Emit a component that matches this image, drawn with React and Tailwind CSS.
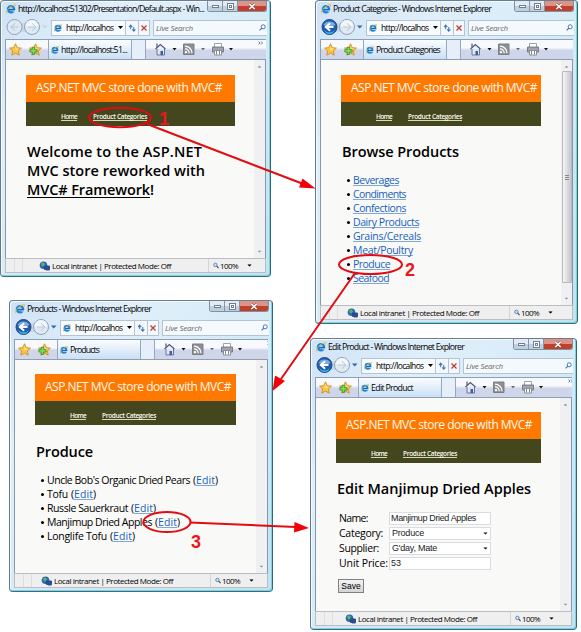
import React, { useLayoutEffect, useRef } from "react";

// Text run whose tracking is adjusted so that it spans a given width.
function Fit({ w, children, className = "" }) {
  const ref = useRef(null);
  useLayoutEffect(() => {
    const el = ref.current;
    el.style.letterSpacing = "0px";
    const natural = el.getBoundingClientRect().width;
    const n = el.textContent.length;
    el.style.letterSpacing = (w - natural) / n + "px";
  }, [w]);
  return (
    <span ref={ref} className={"inline-block whitespace-nowrap " + className}>
      {children}
    </span>
  );
}

const IeIcon = ({ className = "" }) => (
  <svg viewBox="0 0 12 12" className={"shrink-0 " + className}>
    <circle cx="6" cy="6.300" r="3.800" fill="#d8f0ff" stroke="#1b86d8" strokeWidth="2.700" />
    <path d="M3 6.700H10" stroke="#1466b4" strokeWidth="1.900" />
    <path d="M7.800 8.400h3.700" stroke="#e4f1fb" strokeWidth="1.200" />
    <path d="M1 11.300C-.8 9 5 1.500 10.800.8c1.400 0 1 1.300.4 2.400" fill="none" stroke="#e8b13a" strokeWidth="1.100" />
  </svg>
);

const Caret = ({ className = "" }) => (
  <svg viewBox="0 0 5 3" className={"h-[3px] w-[5px] shrink-0 " + className}>
    <path d="M0 0h5L2.500 3z" fill="currentColor" />
  </svg>
);

const Star = ({ plus }) => (
  <svg viewBox="0 0 14 14" className="h-[13px] w-[13px] shrink-0">
    <path
      d="M7 .8l1.900 4.200 4.500.5-3.300 3.100.9 4.500L7 10.900l-4 2.200.9-4.500L.6 5.500l4.500-.5z"
      fill="#fbc540"
      stroke="#d08a1c"
      strokeWidth=".9"
    />
    <path d="M7 3l1 2.800 2.500.4-3.500 2z" fill="#fff0a8" />
    {plus && (
      <path d="M3.500 4.500h2.600v2.600h2.600v2.600h-2.600v2.600h-2.600v-2.600h-2.600v-2.600h2.600z" fill="#7fdc58" stroke="#2f8a2c" strokeWidth=".8" />
    )}
  </svg>
);

function NavButtons({ disabled }) {
  return (
    <svg viewBox="0 0 50 19" className="h-[19px] w-[50px] shrink-0">
      <path d="M12 3.500Q22 7 32 3.500V15.500Q22 12 12 15.500z" fill="#c7d8e8" />
      <circle
        cx="13.500"
        cy="9"
        r="7.500"
        fill={disabled ? "#dce8f3" : "#1e5cb0"}
        stroke={disabled ? "#8fa3b8" : "#24497e"}
        strokeWidth="1"
      />
      {!disabled && <path d="M7.500 7a6.500 5.500 0 0 1 12 0q-6 3-12 0z" fill="#79abe0" />}
      {!disabled && <path d="M8 12q5.500 5 11 0l-2 3q-3.500 2-7 0z" fill="#37b5f0" />}
      <path d="M14.200 5.300L9.800 9l4.400 3.700M10 9h7.500" fill="none" stroke={disabled ? "#b7c6d5" : "#fff"} strokeWidth={disabled ? 1 : 2} />
      <circle cx="31" cy="9" r="7.500" fill="#dfe9f3" stroke="#8fa3b8" strokeWidth="1" />
      <path d="M24.500 8a6.500 6 0 0 1 13 0q-6.500 2-13 0z" fill="#f1f6fb" />
      <path d="M31 5.300L35 9l-4 3.700M35 9h-8" fill="none" stroke="#b9c9d8" strokeWidth="1" />
      <path d="M41 7.500h5.500L43.700 10.600z" fill={disabled ? "#c5d4e2" : "#2a6aa8"} />
    </svg>
  );
}

const Controls = () => (
  <div className="flex h-[11px] w-[60px] shrink-0 overflow-hidden rounded-b-[3px] border border-t-0 border-[#7d91a3]">
    <div className="flex w-[15px] items-center justify-center border-r border-[#8396a8] bg-gradient-to-b from-[#e2ebf4] from-45% to-[#bfcfde] to-50%">
      <div className="h-[3px] w-[7px] border border-[#6f7f8f] bg-white" />
    </div>
    <div className="flex w-[15px] items-center justify-center border-r border-[#8396a8] bg-gradient-to-b from-[#e2ebf4] from-45% to-[#bfcfde] to-50%">
      <div className="flex h-[7px] w-[7px] items-center justify-center border border-[#6f7f8f] bg-white">
        <div className="h-[3px] w-[3px] border border-[#6f7f8f]" />
      </div>
    </div>
    <div className="flex flex-1 items-center justify-center bg-gradient-to-b from-[#dd9488] from-45% to-[#c2402b] to-50%">
      <svg viewBox="0 0 8 7" className="h-[7px] w-[8px]">
        <path d="M1.300 1l5.400 5M6.700 1L1.300 6" stroke="#8c4a42" strokeWidth="2.600" />
        <path d="M1.300 1l5.400 5M6.700 1L1.300 6" stroke="#fff" strokeWidth="1.600" />
      </svg>
    </div>
  </div>
);

function Toolbar() {
  return (
    <svg viewBox="0 0 120 20" className="h-[20px] w-[120px] shrink-0">
      <g transform="translate(1.500 0)">
        <path d="M9.500 8.500h7.500v6.500h-7.500z" fill="#dfe5f2" stroke="#6a7498" />
        <path d="M8 9l4.800-4.500L18 9" fill="#eef2fa" stroke="#4c5785" strokeWidth="1.200" />
        <path d="M9.500 3.500v4" stroke="#5a6488" strokeWidth="1.300" />
        <path d="M13 11h2.500v4h-2.500z" fill="#3e5f9c" />
      </g>
      <path d="M26.500 8h4L28.500 10.500zM83 8h4L85 10.500z" fill="#111" />
      <path d="M55 8h4L57 10.300z" fill="#667" />
      <path d="M37.500 4h10.500v10.500H37.500z" fill="#8d9095" stroke="#7a7f86" />
      <circle cx="40" cy="12.100" r="1.200" fill="#fff" />
      <path d="M39 8.900a4 4 0 0 1 4.200 4.300M39 6.200a7 7 0 0 1 7 7" fill="none" stroke="#fff" strokeWidth="1.200" />
      <path d="M68.500 3.500h7v4h-7z" fill="#fff" stroke="#888d96" strokeWidth=".8" />
      <path d="M66.500 7h11v5h-11z" fill="#a0a4ae" stroke="#666b76" strokeWidth=".8" />
      <path d="M68.500 10.500h7v4.500h-7z" fill="#fff" stroke="#777c86" strokeWidth=".8" />
      <path d="M70.500 11v3.500M73.500 11v3.500" stroke="#666" strokeWidth=".8" />
      <path d="M115 1.500l1.500 1.500-1.500 1.500M112.500 1.500l1.500 1.500-1.500 1.500" fill="none" stroke="#445a90" strokeWidth=".8" />
    </svg>
  );
}

function IeWindow({ box, title, titleW, tab, tabW, disabled, thumb, statusPad = "w-[30px]", zoomPad = "w-[28px]", pagePad, children }) {
  return (
    <section
      className={
        "absolute flex flex-col overflow-hidden rounded-[4px] border border-t-[#697f8d] border-r-[#28697b] border-b-[#35707f] border-l-[#60798c] bg-gradient-to-br from-[#cfe2f5] via-[#e0effa] via-25% to-[#bfe4f0] shadow-[inset_-1px_-1px_0_#85cedf,inset_1px_1px_0_#f4faff] font-['Open_Sans','Noto_Sans',sans-serif] text-[9px] text-black " +
        box
      }
    >
      <header className="flex h-[17px] shrink-0 pl-[5px]">
        <IeIcon className="mt-[3px] h-[10px] w-[10px]" />
        <div className="ml-[2px] flex-1 text-[8.750px] leading-[16px]">
          <Fit w={titleW}>{title}</Fit>
        </div>
        <Controls />
        <div className="w-[3px] shrink-0" />
      </header>
      <div className="flex h-[19px] shrink-0 items-center pr-[3px]">
        <NavButtons disabled={disabled} />
        <div className="flex h-[16px] w-[75px] shrink-0 items-center border border-[#b5c4d2] bg-[#f8fbfd] pl-[2px]">
          <IeIcon className="h-[8px] w-[8px]" />
          <div className="ml-[4px] w-[49px] text-[8.500px] leading-[14px]">
            <Fit w={47.5}>http://localhos</Fit>
          </div>
          <Caret className="ml-[3px]" />
        </div>
        <div className="flex h-[16px] w-[13px] shrink-0 items-center justify-center border-y border-r border-[#b5c4d2] bg-[#f4f8fc]">
          <svg viewBox="0 0 9 9" className="h-[8px] w-[8px]">
            <path d="M3 6V1.500M1.200 3.500L3 1.200l1.800 2.300M6.500 3.500V8M4.800 6L6.500 8l1.800-2" fill="none" stroke="#3c78b8" strokeWidth="1.200" />
          </svg>
        </div>
        <div className="flex h-[16px] w-[11px] shrink-0 items-center justify-center border-y border-r border-[#b5c4d2] bg-[#f4f8fc]">
          <svg viewBox="0 0 6 6" className="h-[6px] w-[6px]">
            <path d="M.5.5l5 5M5.500.5l-5 5" stroke="#c0392e" strokeWidth="1.200" />
          </svg>
        </div>
        <div className="ml-[3px] flex h-[16px] min-w-0 flex-1 items-center border border-r-0 border-[#b5c4d2] bg-[#f4f9fd] pl-[2px] text-[8px] leading-[14px] text-[#666] italic">
          <Fit w={37}>Live Search</Fit>
          <svg viewBox="0 0 8 8" className="mr-[1px] ml-auto h-[7px] w-[7px]">
            <circle cx="4.800" cy="3.200" r="2.300" fill="#fff" stroke="#3c74b0" strokeWidth="1.100" />
            <path d="M3.200 4.800L.7 7.400" stroke="#3c74b0" strokeWidth="1.300" />
          </svg>
        </div>
      </div>
      <div className="mx-[4px] mt-[2px] flex h-[21px] shrink-0 border border-r-0 border-[#8c9fb5] bg-gradient-to-b from-[#f7f9fd] from-40% to-[#cfd6ea] to-55%">
        <div className="flex w-[42px] shrink-0 items-center gap-[7px] pl-[3px]">
          <Star />
          <Star plus />
        </div>
        <div className="flex w-[84px] shrink-0 items-center border-x border-[#93a8c3] bg-gradient-to-b from-[#fbfdff] to-[#cadff5] pl-[2px] text-[8.750px] leading-[18px]">
          <IeIcon className="h-[8px] w-[8px]" />
          <Fit w={tabW} className="ml-[2px]">
            {tab}
          </Fit>
        </div>
        <div className="w-[14px] shrink-0 border-r border-[#93a8c3] bg-[#e6eefa]" />
        <div className="min-w-0 flex-1 overflow-hidden">
          <Toolbar />
        </div>
      </div>
      <div className="mr-[4px] ml-[4px] flex min-h-0 flex-1 border-x border-[#8597a9] bg-[#f9f9f7]">
        <main className={"min-w-0 flex-1 text-black " + pagePad}>
          <div className="h-[27px] bg-[#ff7900] pt-[3px] pl-[10px] text-[12px] leading-[20px] text-[#fff7ee]">
            <Fit w={186}>ASP.NET MVC store done with MVC#</Fit>
          </div>
          <nav className="flex h-[24px] bg-[#44461d] pt-[10px] pl-[35px] text-[6.500px] leading-[9px] font-semibold text-[#fdfdf0]">
            <a className="h-[9px] border-b border-[#d8d8c0]">
              <Fit w={16} className="align-top">Home</Fit>
            </a>
            <a className="ml-[16px] h-[9px] border-b border-[#d8d8c0]">
              <Fit w={54} className="align-top">Product Categories</Fit>
            </a>
          </nav>
          {children}
        </main>
        <div className="flex w-[11px] shrink-0 flex-col items-center bg-[#f0f0f2] py-[5px] text-[#889]">
          <Caret className="rotate-180 scale-75" />
          {thumb ? (
            <div className="mt-[3px] flex h-[212px] w-[10px] flex-col items-center justify-center gap-[1px] rounded-[1px] border border-[#b9b9bd] bg-gradient-to-r from-[#f6f6f8] to-[#c6c6cb]">
              <div className="h-px w-[4px] bg-[#888]" />
              <div className="h-px w-[4px] bg-[#888]" />
              <div className="h-px w-[4px] bg-[#888]" />
            </div>
          ) : null}
          <Caret className="mt-auto scale-75" />
        </div>
      </div>
      <footer className="mx-[4px] mb-[3px] flex h-[15px] shrink-0 items-center border border-[#b9bec5] bg-[#f0efef] text-[8px] leading-[13px]">
        <div className={"flex shrink-0 self-stretch " + statusPad}>
          <div className="w-[9px] border-r border-[#dedee0]" />
          <div className="w-[8px] border-r border-[#dedee0]" />
        </div>
        <svg viewBox="0 0 11 10" className="h-[10px] w-[11px] shrink-0">
          <circle cx="4.500" cy="4.300" r="3.800" fill="#2c66b8" />
          <path d="M2 2.500q2-2 3.500 0T3 5.500z" fill="#58b84f" />
          <path d="M5.500 5h5v3.500h-5zM7 9h3.500" fill="#234f9d" stroke="#27458b" strokeWidth=".9" />
        </svg>
        <Fit w={119} className="ml-[2px] shrink-0">Local intranet | Protected Mode: Off</Fit>
        <div className={"ml-[10px] shrink-0 self-stretch border-r border-[#d5d5d8] " + zoomPad} />
        <svg viewBox="0 0 7 7" className="ml-[4px] h-[7px] w-[6px] shrink-0">
          <circle cx="2.800" cy="2.800" r="2" fill="#cfe5f7" stroke="#4a80b5" />
          <path d="M4.300 4.300l2.200 2.200" stroke="#345" strokeWidth="1.200" />
        </svg>
        <Fit w={18} className="ml-[1px] shrink-0">100%</Fit>
        <Caret className="ml-[9px] scale-90" />
      </footer>
    </section>
  );
}

const Link = ({ w, children }) => (
  <a className="inline-block h-[12px] border-b border-[#7fa9dc] leading-[13px] text-[#1a5fc0]">
    <Fit w={w} className="align-top">{children}</Fit>
  </a>
);

const Bullet = () => <span className="mr-[3px] h-[3px] w-[3px] shrink-0 rounded-full bg-black" />;

const categories = [
  ["Beverages", 46],
  ["Condiments", 53],
  ["Confections", 53],
  ["Dairy Products", 66],
  ["Grains/Cereals", 68],
  ["Meat/Poultry", 60],
  ["Produce", 37],
  ["Seafood", 36],
];

const products = [
  ["Uncle Bob's Organic Dried Pears", 143],
  ["Tofu", 21],
  ["Russle Sauerkraut", 81],
  ["Manjimup Dried Apples", 105],
  ["Longlife Tofu", 60],
];

const Field = ({ label, w, value, vw, select }) => (
  <div className="flex h-[15px] items-center">
    <div className="w-[50px] shrink-0 text-[10.500px] leading-[15px] font-medium">
      <Fit w={w}>{label}</Fit>
    </div>
    <div
      className={
        "flex h-[13px] w-[102px] items-center border border-[#d9dce0] bg-white font-['Liberation_Sans',sans-serif] text-[9px] leading-[11px] text-[#222] " +
        (select ? "pl-[2px]" : "pl-[1px]")
      }
    >
      <Fit w={vw}>{value}</Fit>
      {select && <Caret className="mr-[2px] ml-auto scale-90" />}
    </div>
  </div>
);

export default function App() {
  return (
    <div className="relative h-[632px] w-[581px] overflow-hidden bg-white font-['Open_Sans','Noto_Sans',sans-serif]">
      <IeWindow
        box="left-0 top-0 h-[277px] w-[271px]"
        title="http://localhost:51302/Presentation/Default.aspx - Win..."
        titleW={186}
        tab="http://localhost:51..."
        tabW={66}
        disabled
        statusPad="w-[33px]"
        pagePad="pt-[15px] pl-[20px] pr-[19px]"
      >
        <h1 className="mt-[16px] ml-[1px] text-[14.500px] leading-[19px] font-semibold">
          <Fit w={175} className="block w-fit">Welcome to the ASP.NET</Fit>
          <Fit w={178} className="block w-fit">MVC store reworked with</Fit>
          <span className="flex">
            <span className="h-[18px] border-b border-black">
              <Fit w={123} className="align-top">MVC# Framework</Fit>
            </span>
            !
          </span>
        </h1>
      </IeWindow>

      <IeWindow
        box="left-[315px] top-0 h-[324px] w-[263px]"
        title="Product Categories - Windows Internet Explorer"
        titleW={158}
        tab="Product Categories"
        tabW={64}
        thumb
        statusPad="w-[26px]"
        zoomPad="w-[21px]"
        pagePad="pt-[15px] pl-[20px] pr-[20px]"
      >
        <h1 className="mt-[16px] ml-[1px] text-[14.500px] leading-[19px] font-semibold">
          <Fit w={117}>Browse Products</Fit>
        </h1>
        <ul className="mt-[12px] ml-[6px] text-[10.500px] font-medium">
          {categories.map(([name, w]) => (
            <li key={name} className="flex h-[14px] items-center">
              <Bullet />
              <Link w={w}>{name}</Link>
            </li>
          ))}
        </ul>
      </IeWindow>

      <IeWindow
        box="left-[9px] top-[300px] h-[292px] w-[264px]"
        title="Products - Windows Internet Explorer"
        titleW={124}
        tab="Products"
        tabW={29}
        statusPad="w-[26px]"
        pagePad="pt-[14px] pl-[20px] pr-[20px]"
      >
        <h1 className="mt-[17px] ml-[1px] text-[14.500px] leading-[19px] font-semibold">
          <Fit w={57}>Produce</Fit>
        </h1>
        <ul className="mt-[12px] ml-[6px] text-[10.500px] font-medium">
          {products.map(([name, w]) => (
            <li key={name} className="flex h-[14px] items-center leading-[14px]">
              <Bullet />
              <Fit w={w}>{name}</Fit>
              <span className="ml-[3px]">(</span>
              <Link w={19}>Edit</Link>
              <span>)</span>
            </li>
          ))}
        </ul>
      </IeWindow>

      <IeWindow
        box="left-[310px] top-[338px] h-[292px] w-[267px]"
        title="Edit Product - Windows Internet Explorer"
        titleW={136}
        tab="Edit Product"
        tabW={42}
        statusPad="w-[29px]"
        zoomPad="w-[24px]"
        pagePad="pt-[14px] pl-[20px] pr-[19px]"
      >
        <h1 className="mt-[16px] ml-[1px] text-[14.500px] leading-[19px] font-semibold">
          <Fit w={194}>Edit Manjimup Dried Apples</Fit>
        </h1>
        <div className="mt-[13px] ml-[3px]">
          <Field label="Name:" w={29} value="Manjimup Dried Apples" vw={85} />
          <Field label="Category:" w={44} value="Produce" vw={32} select />
          <Field label="Supplier:" w={40} value="G'day, Mate" vw={45} select />
          <Field label="Unit Price:" w={49} value="53" vw={10} />
        </div>
        <button className="mt-[8px] ml-[2px] flex h-[14px] w-[26px] items-center justify-center border border-[#808080] bg-gradient-to-b from-[#f4f4f4] to-[#d5d5d5] font-['Liberation_Sans',sans-serif] text-[8.500px]">
          Save
        </button>
      </IeWindow>

      <svg viewBox="0 0 581 632" className="absolute inset-0 h-[632px] w-[581px]">
        <g fill="none" stroke="#e30b12" strokeWidth="2">
          <ellipse cx="120" cy="117.500" rx="31" ry="9.700" />
          <ellipse cx="370.500" cy="264.500" rx="31.500" ry="9.500" />
          <ellipse cx="167" cy="522" rx="23.500" ry="10" />
          <path d="M147 124L302 183.500M355 273L281 379M190 522.500L296 527" />
        </g>
        <path d="M315.500 188.500L299 187.500L302.500 178.500zM272.500 391L275 375.500L285 381zM309 528L294 532.500L294.500 522z" fill="#f60008" />
        <g fill="#f0141c" fontFamily="Liberation Sans, sans-serif" fontWeight="700" fontSize="18">
          <text x="159" y="125">1</text>
          <text x="405" y="276">2</text>
          <text x="191" y="548">3</text>
        </g>
      </svg>
    </div>
  );
}
